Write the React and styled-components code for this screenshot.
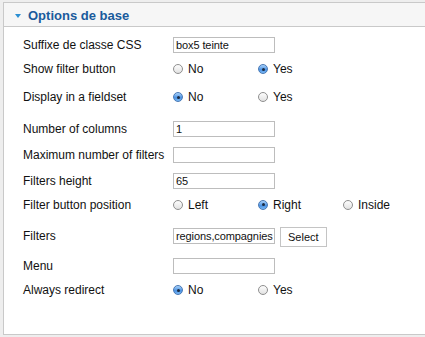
import React from 'react';
import styled, { createGlobalStyle } from 'styled-components';

const GlobalStyle = createGlobalStyle`
  html, body {
    margin: 0;
    padding: 0;
    background: #eeeeee;
    overflow: hidden;
  }
  body {
    font-family: 'Liberation Sans', Arial, Helvetica, sans-serif;
  }
`;

const rows = [
  { label: 'Suffixe de classe CSS', type: 'text', value: 'box5 teinte', space: 0 },
  { label: 'Show filter button', type: 'radio', options: ['No', 'Yes'], checked: 1, space: 0.5 },
  { label: 'Display in a fieldset', type: 'radio', options: ['No', 'Yes'], checked: 0, space: 4 },
  { label: 'Number of columns', type: 'text', value: '1', space: 7.5 },
  { label: 'Maximum number of filters', type: 'text', value: '', space: 2 },
  { label: 'Filters height', type: 'text', value: '65', space: 2 },
  { label: 'Filter button position', type: 'radio', options: ['Left', 'Right', 'Inside'], checked: 1, space: 0 },
  { label: 'Filters', type: 'text', value: 'regions,compagnies', button: 'Select', space: 7.5 },
  { label: 'Menu', type: 'text', value: '', space: 6 },
  { label: 'Always redirect', type: 'radio', options: ['No', 'Yes'], checked: 0, space: 0 },
];

const Panel = styled.div`
  margin: 2px -20px 0 3px;
  height: 333px;
  box-sizing: border-box;
  border: 1px solid #c9c9c9;
  background: #fff;
`;

const Header = styled.div`
  height: 23px;
  display: flex;
  align-items: center;
  padding-left: 11px;
  background: #f6f6f6;
  border-bottom: 1px solid #c9c9c9;
`;

const Arrow = styled.span`
  width: 0;
  height: 0;
  margin: 2px 7px 0 0;
  border-left: 3.5px solid transparent;
  border-right: 3.5px solid transparent;
  border-top: 4px solid #2b8fd3;
`;

const Title = styled.h3`
  margin: 1px 0 0;
  font-size: 13px;
  font-weight: bold;
  color: #1a5b9c;
`;

const Body = styled.div`
  padding: 5.5px 0 0 19px;
`;

const Row = styled.div`
  display: flex;
  align-items: center;
  height: 24px;
  margin-top: ${p => p.$space}px;
`;

const Label = styled.label`
  width: 150px;
  flex-shrink: 0;
  font-size: 12px;
  color: #111;
`;

const Controls = styled.div`
  display: flex;
  align-items: center;
  gap: ${p => p.$gap || 0}px;
`;

const TextInput = styled.input`
  width: 102px;
  height: 16px;
  box-sizing: border-box;
  margin: 0;
  padding: 0 0 0 2px;
  border: 1px solid #bdbdbd;
  font-family: 'Liberation Sans', Arial, sans-serif;
  font-size: 11px;
  letter-spacing: -0.1px;
  color: #111;
  outline: none;
`;

const Button = styled.button`
  height: 20px;
  padding: 0 7px;
  margin: 2px 0 0 0;
  border: 1px solid #c4c4c4;
  background: #fff;
  font-family: 'Liberation Sans', Arial, sans-serif;
  font-size: 11px;
  color: #111;
`;

const Option = styled.span`
  width: 85px;
  display: flex;
  align-items: center;
  gap: 5px;
  font-size: 12px;
  color: #111;
`;

const Radio = styled.span`
  position: relative;
  width: 10px;
  height: 10px;
  box-sizing: border-box;
  border-radius: 50%;
  border: 1px solid ${p => (p.$on ? '#4a79b5' : '#8f8f8f')};
  background: ${p =>
    p.$on
      ? 'linear-gradient(#a9d2fa, #4a91e2 60%, #7cbaf6)'
      : 'linear-gradient(#fdfdfd, #e2e2e2)'};

  &::after {
    content: '';
    display: ${p => (p.$on ? 'block' : 'none')};
    position: absolute;
    left: 2.5px;
    top: 2.5px;
    width: 3px;
    height: 3px;
    border-radius: 50%;
    background: #1c2a3f;
  }
`;

const Field = ({ row }) => {
  if (row.type === 'radio') {
    return (
      <Controls>
        {row.options.map((opt, i) => (
          <Option key={opt}>
            <Radio $on={i === row.checked} />
            {opt}
          </Option>
        ))}
      </Controls>
    );
  }
  return (
    <Controls $gap={5}>
      <TextInput defaultValue={row.value} readOnly />
      {row.button ? <Button>{row.button}</Button> : null}
    </Controls>
  );
};

export default function App() {
  return (
    <>
      <GlobalStyle />
      <Panel>
        <Header>
          <Arrow />
          <Title>Options de base</Title>
        </Header>
        <Body>
          {rows.map(row => (
            <Row key={row.label} $space={row.space}>
              <Label>{row.label}</Label>
              <Field row={row} />
            </Row>
          ))}
        </Body>
      </Panel>
    </>
  );
}
